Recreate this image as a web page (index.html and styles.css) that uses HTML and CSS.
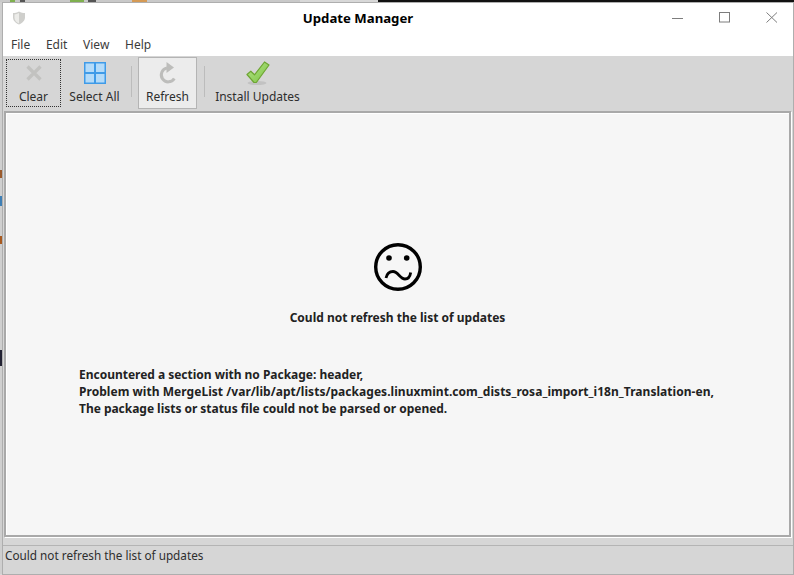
FILE: index.html
```html
<!DOCTYPE html>
<html lang="en">
<head>
<meta charset="utf-8">
<title>Update Manager</title>
<link rel="stylesheet" href="styles.css">
</head>
<body>
<div class="window">
  <header class="titlebar">
    <svg class="app-icon" width="14" height="14" viewBox="0 0 14 14"><path d="M7 .5c2 1.100 4 1.500 6 1.600v4.400c0 3-2.600 5.600-6 7-3.400-1.400-6-4-6-7V2.100C3 2 5 1.600 7 .5z" fill="#cfcfcc"/><path d="M7 2v10.500C4.500 11.500 2.500 9.300 2.500 6.800V3.400C4 3.300 5.500 2.900 7 2z" fill="#ecece9"/></svg>
    <h1 class="title">Update Manager</h1>
    <div class="controls">
      <svg width="12" height="12" viewBox="0 0 12 12"><path d="M0 6.500h11" stroke="#7d7d7d" fill="none"/></svg>
      <svg width="12" height="12" viewBox="0 0 12 12"><rect x=".5" y=".5" width="10" height="9.500" stroke="#7d7d7d" fill="none"/></svg>
      <svg width="12" height="12" viewBox="0 0 12 12"><path d="M.5.500l10.500 10M11 .500L.5 10.500" stroke="#7d7d7d" fill="none"/></svg>
    </div>
  </header>
  <nav class="menubar">
    <span>File</span><span>Edit</span><span>View</span><span>Help</span>
  </nav>
  <div class="toolbar">
    <button class="tool tool-clear">
      <svg width="16" height="16" viewBox="0 0 16 16"><path d="M1.500 1.500l13 13M14.500 1.500l-13 13" stroke="#c2c2c0" stroke-width="3.200" fill="none"/></svg>
      <span>Clear</span>
    </button>
    <button class="tool tool-select">
      <svg width="22" height="22" viewBox="0 0 22 22"><rect width="22" height="22" fill="#3f9be8"/><rect x="1.500" y="1.500" width="8.500" height="8.500" fill="#b4dbf9"/><rect x="12" y="1.500" width="8.500" height="8.500" fill="#b4dbf9"/><rect x="1.500" y="12" width="8.500" height="8.500" fill="#b4dbf9"/><rect x="12" y="12" width="8.500" height="8.500" fill="#b4dbf9"/></svg>
      <span>Select All</span>
    </button>
    <i class="sep sep-a"></i>
    <button class="tool tool-refresh">
      <svg width="20" height="22" viewBox="0 0 20 22"><path d="M16.300 16.500A7 7 0 1 1 9 6" stroke="#bdbdbb" stroke-width="3" fill="none"/><path d="M8.500 0v11L16 5.500z" fill="#bdbdbb"/></svg>
      <span>Refresh</span>
    </button>
    <i class="sep sep-b"></i>
    <button class="tool tool-install">
      <svg width="26" height="26" viewBox="0 0 26 26"><defs><linearGradient id="chk" x1="0" y1="0" x2="1" y2="1"><stop offset="0" stop-color="#b5e58a"/><stop offset="1" stop-color="#7cc342"/></linearGradient></defs><ellipse cx="12" cy="23" rx="9.500" ry="2" fill="#c2c2c2"/><path d="M2 14.500l3.800-3.300 3.700 3.600L19.500 2l4.500 3-12.700 17.500H9z" fill="url(#chk)" stroke="#6ea533" stroke-width="1.200" stroke-linejoin="round"/></svg>
      <span>Install Updates</span>
    </button>
  </div>
  <main class="content">
    <svg class="face" width="50" height="50" viewBox="0 0 50 50"><circle cx="25" cy="25" r="22.300" fill="none" stroke="#000" stroke-width="3.400"/><circle cx="16" cy="16" r="2.800" fill="#000"/><circle cx="33.700" cy="16" r="2.800" fill="#000"/><path d="M13 36c1-4.500 4-6.500 7-6.500 5 0 7 7.500 12 7.500 3 0 5-2 5.700-6.500" fill="none" stroke="#000" stroke-width="2.800"/></svg>
    <p class="headline">Could not refresh the list of updates</p>
    <p class="details">
      <span class="line line-a">Encountered a section with no Package: header,</span>
      <span class="line line-b">Problem with MergeList /var/lib/apt/lists/packages.linuxmint.com_dists_rosa_import_i18n_Translation-en,</span>
      <span class="line line-c">The package lists or status file could not be parsed or opened.</span>
    </p>
  </main>
  <footer class="statusbar">Could not refresh the list of updates</footer>
</div>
</body>
</html>
```
FILE: styles.css
```css
* { box-sizing: border-box; }
html, body { margin: 0; height: 100%; }
body {
  width: 794px; height: 575px; overflow: hidden;
  padding: 3px 1px 1px 3px;
  background:
    linear-gradient(90deg, #c9c9c9 0 10px, #7fb04f 10px 15px, #c9c9c9 15px 20px, #555 20px 25px, #c9c9c9 25px 70px, #7fb04f 70px 84px, #c9c9c9 84px 88px, #555 88px 96px, #c9c9c9 96px 132px, #d59a55 132px 147px, #c9c9c9 147px 300px, #d8d8d8 300px 378px, #111 378px) top / 100% 2px no-repeat,
    linear-gradient(90deg, #d8d8d8 0 397px, #0c0c0c 397px) bottom / 100% 1px no-repeat,
    linear-gradient(180deg, #cfcfcf 0 170px, #9a5a2c 170px 178px, #cfcfcf 178px 196px, #3f7fb5 196px 206px, #cfcfcf 206px 236px, #a85a20 236px 244px, #cfcfcf 244px 350px, #223 350px 366px, #cfcfcf 366px) left / 2px 100% no-repeat,
    #c4c4c4;
  font-family: "Noto Sans", sans-serif;
  font-size: 12px;
  color: #2e2e2e;
}
.window { display: flex; flex-direction: column; width: 790px; height: 571px; background: #d6d6d6; box-shadow: 0 0 0 1px #aeaeae; }
.titlebar { height: 30px; flex: none; background: #fff; display: flex; align-items: center; position: relative; padding-left: 9px; }
.app-icon { flex: none; }
.title { position: absolute; left: 0; right: 80px; margin: 0; text-align: center; font-size: 13.2px; font-weight: 700; color: #000; }
.controls { margin-left: auto; display: flex; gap: 35px; padding-right: 15px; }
.menubar { height: 23px; flex: none; background: #fff; display: flex; gap: 15.7px; padding-left: 8px; align-items: center; color: #3c3c3c; }
.toolbar { height: 55px; flex: none; display: flex; align-items: flex-start; padding-left: 3px; }
.tool { appearance: none; background: none; border: 1px solid transparent; margin: 3px 0 0; font: inherit; line-height: 16px; color: #2e2e2e; display: flex; flex-direction: column; align-items: center; height: 48px; padding: 2px 0 1px; }
.tool span { margin-top: auto; }
.tool-clear { width: 55px; border: 1px dotted #333; padding-top: 5px; }
.tool-select { width: 67px; }
.tool-refresh { width: 59px; height: 52px; margin-top: 1px; padding: 4px 0 3px; background: #ececec; border: 1px solid #b4b4b4; }
.tool-install { width: 105px; padding-top: 0; }
.sep { width: 1px; height: 31px; margin-top: 10px; background: #bcbcbc; flex: none; }
.sep-a { margin-left: 3px; margin-right: 6px; }
.sep-b { margin-left: 7px; }
.content { height: 426px; flex: none; margin: 0 2px 0 1px; background: #f6f6f6; border: 2px solid #a9a9a9; box-shadow: inset 1px 1px 0 #fff, 1px 1px 0 #fff; display: flex; flex-direction: column; align-items: center; padding-top: 129px; font-weight: 700; color: #222; }
.face { flex: none; }
.headline { margin: 17px 0 0; line-height: 18px; }
.details { margin: 39px 0 0; align-self: flex-start; padding-left: 73px; white-space: nowrap; }
.line { display: block; line-height: 17px; }
.line-a { letter-spacing: -0.02px; }
.line-b { letter-spacing: 0.04px; }
.line-c { letter-spacing: -0.03px; }
.statusbar { margin-top: 8px; border-top: 1px solid #b4b4b4; flex: 1; padding: 0 0 0 2px; font-size: 11.75px; line-height: 18px; color: #2e2e2e; }
```
